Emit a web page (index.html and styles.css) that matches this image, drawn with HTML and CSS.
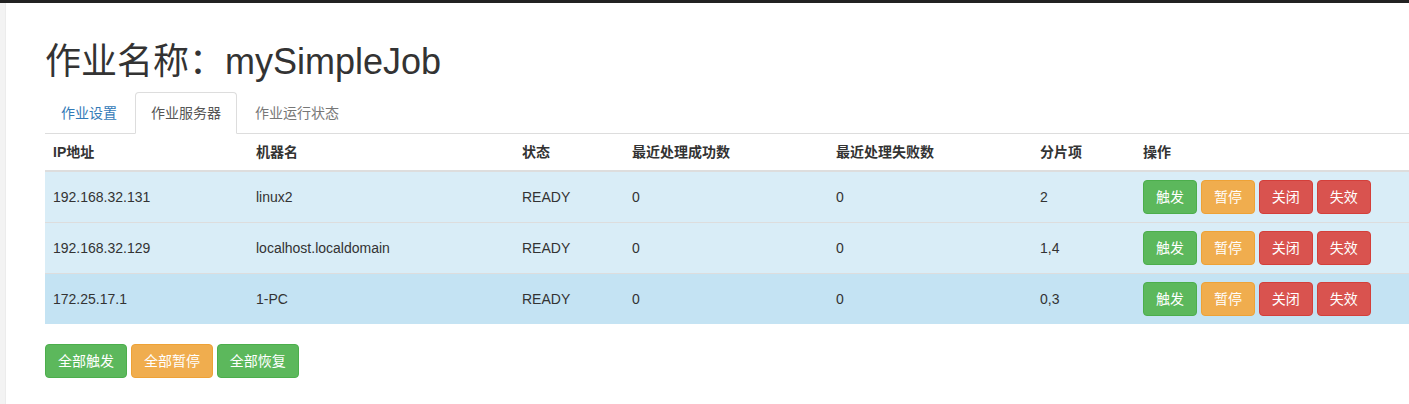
FILE: index.html
```html
<!DOCTYPE html>
<html lang="zh">
<head>
<meta charset="utf-8">
<title>作业服务器</title>
<link rel="stylesheet" href="styles.css">
</head>
<body>
<div class="topbar"></div>
<div class="layout">
  <aside class="sidebar"></aside>
  <main class="main">
    <h1 class="title">作业名称：mySimpleJob</h1>
    <ul class="tabs">
      <li class="tab"><a class="tab-link">作业设置</a></li>
      <li class="tab active"><a class="tab-link">作业服务器</a></li>
      <li class="tab muted"><a class="tab-link">作业运行状态</a></li>
    </ul>
    <table class="grid">
      <thead>
        <tr>
          <th class="c-ip">IP地址</th>
          <th class="c-host">机器名</th>
          <th class="c-status">状态</th>
          <th class="c-ok">最近处理成功数</th>
          <th class="c-fail">最近处理失败数</th>
          <th class="c-shard">分片项</th>
          <th class="c-ops">操作</th>
        </tr>
      </thead>
      <tbody>
        <tr class="info">
          <td>192.168.32.131</td><td>linux2</td><td>READY</td><td>0</td><td>0</td><td>2</td>
          <td><button class="btn green">触发</button> <button class="btn orange">暂停</button> <button class="btn red">关闭</button> <button class="btn red">失效</button></td>
        </tr>
        <tr class="info">
          <td>192.168.32.129</td><td>localhost.localdomain</td><td>READY</td><td>0</td><td>0</td><td>1,4</td>
          <td><button class="btn green">触发</button> <button class="btn orange">暂停</button> <button class="btn red">关闭</button> <button class="btn red">失效</button></td>
        </tr>
        <tr class="info hover">
          <td>172.25.17.1</td><td>1-PC</td><td>READY</td><td>0</td><td>0</td><td>0,3</td>
          <td><button class="btn green">触发</button> <button class="btn orange">暂停</button> <button class="btn red">关闭</button> <button class="btn red">失效</button></td>
        </tr>
      </tbody>
    </table>
    <div class="actions">
      <button class="btn green">全部触发</button> <button class="btn orange">全部暂停</button> <button class="btn green">全部恢复</button>
    </div>
  </main>
</div>
</body>
</html>
```

FILE: styles.css
```css
html, body {
  margin: 0;
  padding: 0;
  overflow: hidden;
  background: #fff;
}
body {
  font-family: "Liberation Sans", "Noto Sans CJK SC", sans-serif;
  font-size: 14px;
  line-height: 20px;
  color: #333;
  width: 1409px;
  height: 404px;
}
.topbar {
  height: 3px;
  background: #222;
}
.layout {
  display: flex;
  height: 401px;
}
.sidebar {
  width: 5px;
  flex: 0 0 5px;
  background: #f3f3f3;
  border-right: 1px solid #ececec;
}
.main {
  flex: 1 1 auto;
  min-width: 0;
  margin-left: 39px;
  padding-top: 19px;
}
.title {
  margin: 20px 0 10px;
  font-size: 36px;
  line-height: 40px;
  font-weight: 400;
  color: #333;
}
.tabs {
  list-style: none;
  margin: 0;
  padding: 0;
  display: flex;
  border-bottom: 1px solid #ddd;
}
.tab {
  margin-bottom: -1px;
  margin-right: 2px;
}
.tab-link {
  display: block;
  padding: 10px 15px;
  line-height: 20px;
  border: 1px solid transparent;
  border-radius: 4px 4px 0 0;
  color: #337ab7;
}
.tab.active .tab-link {
  color: #555;
  background: #fff;
  border-color: #ddd #ddd transparent;
}
.tab.muted .tab-link {
  color: #777;
}
.grid {
  width: 100%;
  border-collapse: collapse;
  border-spacing: 0;
  margin-bottom: 20px;
}
.grid th, .grid td {
  padding: 8px;
  line-height: 20px;
  text-align: left;
  vertical-align: middle;
}
.grid th {
  font-weight: bold;
  border-bottom: 2px solid #ddd;
}
.grid td {
  border-top: 1px solid #ddd;
  white-space: nowrap;
}
.grid tr.info td { background: #d9edf7; }
.grid tr.info.hover td { background: #c4e3f3; }
.c-ip { width: 187px; }
.c-host { width: 250px; }
.c-status { width: 94px; }
.c-ok { width: 188px; }
.c-fail { width: 188px; }
.c-shard { width: 87px; }
.btn {
  display: inline-block;
  font-family: inherit;
  font-size: 14px;
  line-height: 20px;
  padding: 6px 12px;
  border: 1px solid transparent;
  border-radius: 4px;
  color: #fff;
  margin: 0;
  cursor: pointer;
}
.btn.green { background: #5cb85c; border-color: #4cae4c; }
.btn.orange { background: #f0ad4e; border-color: #eea236; }
.btn.red { background: #d9534f; border-color: #d43f3a; }
.actions { font-size: 14px; }
```
